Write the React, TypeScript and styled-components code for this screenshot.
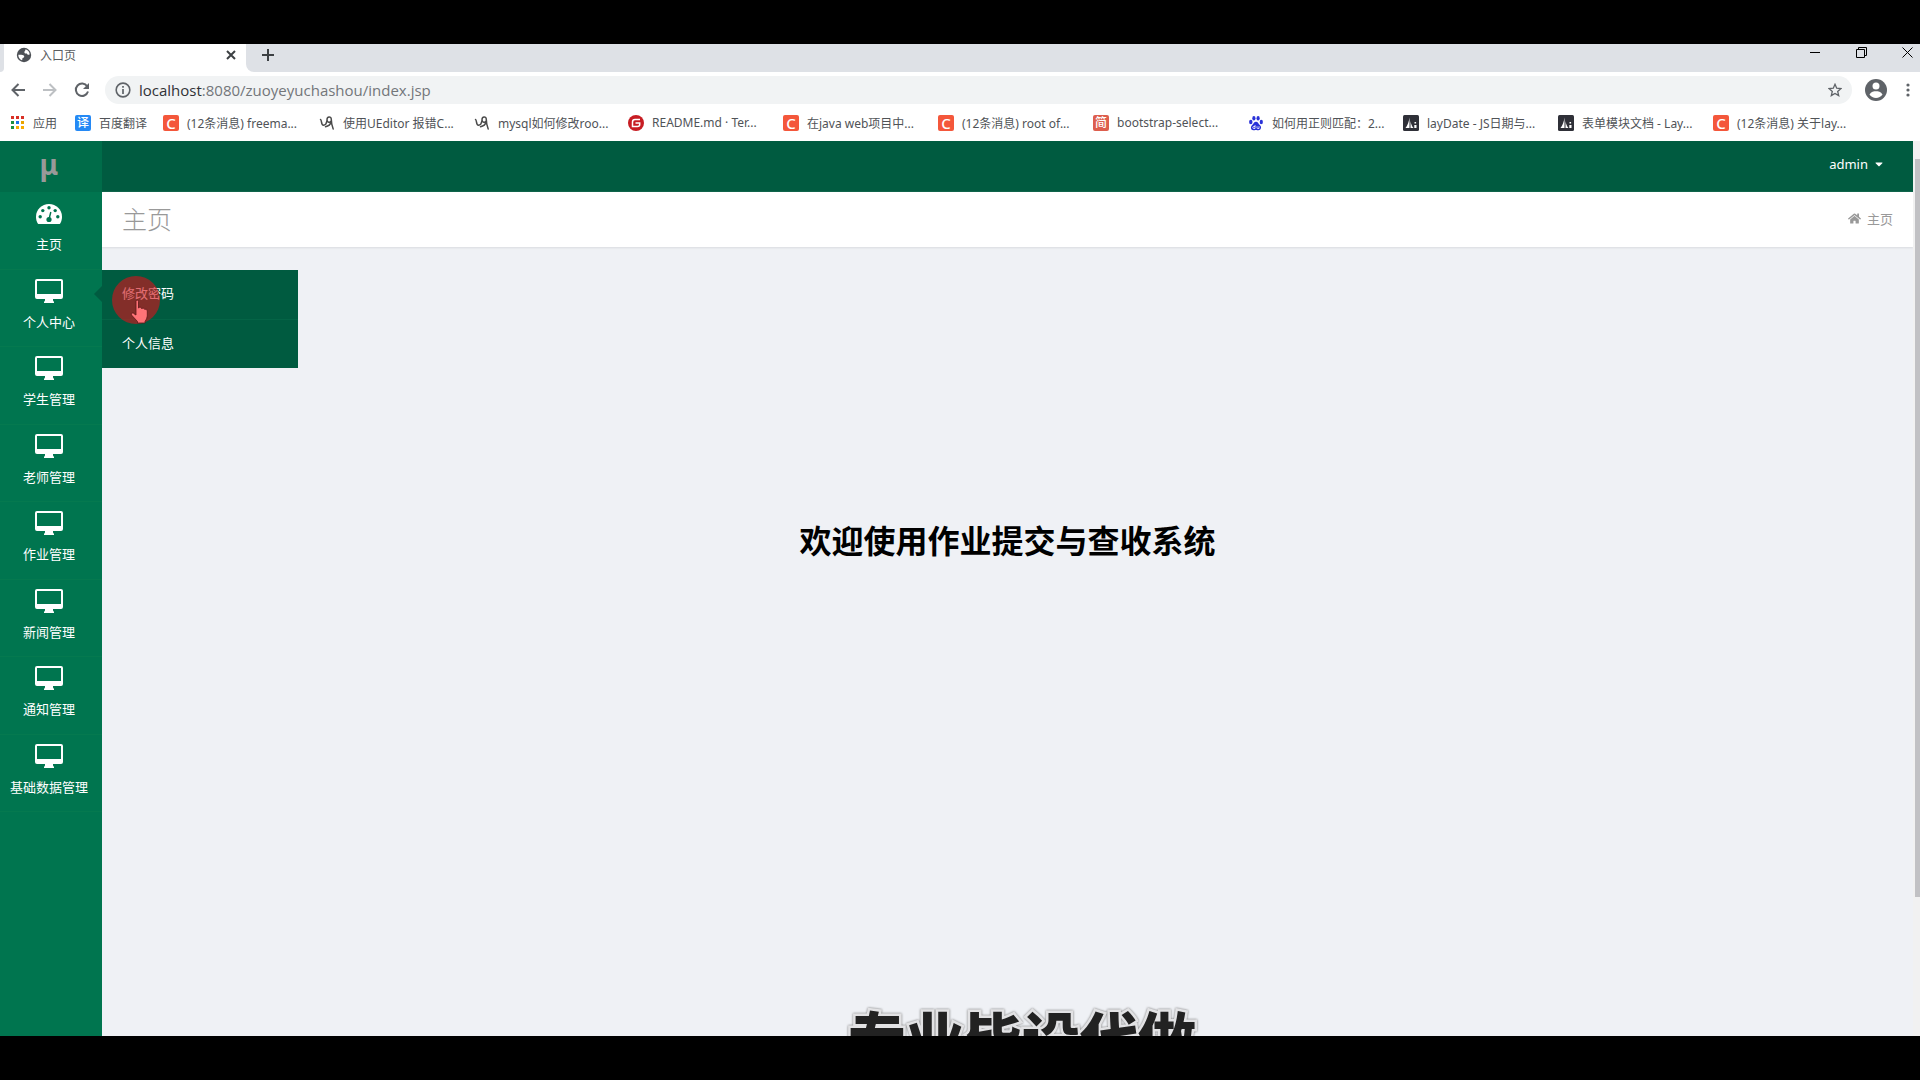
import React from "react";
import styled, { createGlobalStyle } from "styled-components";
import { FaHome, FaCaretDown } from "react-icons/fa";

const ui = `"Noto Sans", "Noto Sans CJK SC", sans-serif`;

const Global = createGlobalStyle`
  * { box-sizing: border-box; }
  body { margin: 0; background: #000; font-family: ${ui}; }
  button { font: inherit; color: inherit; background: none; border: 0; padding: 0; cursor: pointer; }
  a { color: inherit; text-decoration: none; }
  svg { display: block; flex: none; }
`;

const Frame = styled.div`
  height: 100vh;
  padding: 44px 0;
  background: #000;
  display: flex;
`;
const Browser = styled.div`
  position: relative;
  flex: 1;
  min-width: 0;
  display: flex;
  flex-direction: column;
  overflow: hidden;
  background: #fff;
`;
const TabStrip = styled.header`
  height: 28px;
  flex: none;
  display: flex;
  align-items: stretch;
`;
const StripStart = styled.div`
  width: 4px;
  background: #dee1e6;
  border-radius: 0 0 4px 0;
`;
const StripRest = styled.div`
  flex: 1;
  display: flex;
  background: #dee1e6;
  border-radius: 0 0 0 8px;
`;
const Tab = styled.div`
  width: 242px;
  display: flex;
  align-items: center;
  gap: 8px;
  padding: 0 8px 6px 12px;
  font-size: 12px;
  color: #5a5d61;
`;
const TabTitle = styled.span`
  flex: 1;
`;
const IconButton = styled.button<{ $w: number }>`
  width: ${(p) => p.$w}px;
  display: flex;
  align-items: center;
  justify-content: center;
`;
const NewTab = styled(IconButton)`
  padding-bottom: 6px;
`;
const WindowControls = styled.div`
  margin: 0 -10px 0 auto;
  display: flex;
  padding-bottom: 12px;
`;
const Toolbar = styled.div`
  height: 36px;
  flex: none;
  display: flex;
  align-items: center;
  padding-left: 2px;
`;
const Address = styled.div`
  flex: 1;
  height: 28px;
  display: flex;
  align-items: center;
  gap: 8px;
  margin: 0 4px 0 7px;
  padding: 0 10px;
  border-radius: 14px;
  background: #f1f3f4;
  font-family: "Open Sans", ${ui};
  font-size: 15px;
  color: #73767a;
`;
const Url = styled.span`
  flex: 1;
  line-height: 26px;
  b { font-weight: 400; color: #303236; }
`;
const Bookmarks = styled.nav`
  height: 33px;
  flex: none;
  display: flex;
  align-items: center;
  padding: 0 11px 4px;
  font-size: 12px;
  color: #505357;
  white-space: nowrap;
`;
const Bookmark = styled.a<{ $w: number }>`
  width: ${(p) => p.$w}px;
  display: flex;
  align-items: center;
  gap: 8px;
`;
const Favicon = styled.span<{ $bg: string; $size?: number }>`
  width: 16px;
  height: 16px;
  flex: none;
  display: flex;
  align-items: center;
  justify-content: center;
  border-radius: 2px;
  background: ${(p) => p.$bg};
  color: #fff;
  font-size: ${(p) => p.$size ?? 12}px;
  font-weight: 500;
  line-height: 16px;
`;
const Viewport = styled.div`
  flex: 1;
  min-height: 0;
  display: flex;
`;
const Sidebar = styled.aside`
  position: relative;
  width: 102px;
  flex: none;
  background: #00754f;
  color: #fff;
`;
const Brand = styled.a`
  height: 51px;
  display: flex;
  align-items: center;
  justify-content: center;
  padding: 0 4px 5px 0;
  background: #006c49;
  color: #999;
  font-size: 28px;
  font-weight: 700;
`;
const Menu = styled.nav`
  height: 620px;
  display: grid;
  grid-template-rows: repeat(8, 1fr);
`;
const MenuItem = styled.a`
  display: flex;
  flex-direction: column;
  align-items: center;
  gap: 9px;
  padding: 9px 4px 0 0;
  border-bottom: 1px solid #05794f;
  font-size: 13px;
  line-height: 20px;
  white-space: nowrap;
`;
const IconSlot = styled.span`
  height: 24px;
  display: flex;
  align-items: flex-end;
`;
const Submenu = styled.div`
  position: absolute;
  z-index: 2;
  left: 102px;
  top: 129px;
  width: 196px;
  background: #005b40;
  &::before {
    content: "";
    position: absolute;
    right: 100%;
    top: 16px;
    border: 8px solid transparent;
    border-left-width: 0;
    border-right-color: #005b40;
  }
`;
const SubItem = styled.a`
  height: 49px;
  display: flex;
  align-items: center;
  padding: 0 20px 4px;
  font-size: 13px;
  & + & { border-top: 1px solid #046446; }
`;
const Pointer = styled.div`
  position: absolute;
  left: 9px;
  top: 5px;
  width: 50px;
  height: 50px;
  pointer-events: none;
`;
const Main = styled.main`
  flex: 1;
  min-width: 0;
  display: flex;
  flex-direction: column;
  background: #eff1f5;
`;
const TopBar = styled.div`
  height: 51px;
  flex: none;
  display: flex;
  align-items: center;
  justify-content: flex-end;
  padding: 0 28px 6px 0;
  background: #005b40;
  color: #fff;
`;
const UserButton = styled.button`
  display: flex;
  align-items: center;
  gap: 5px;
  font-size: 13px;
`;
const TitleBar = styled.div`
  height: 55px;
  flex: none;
  display: flex;
  align-items: center;
  justify-content: space-between;
  padding: 0 20px 2px;
  background: #fff;
  box-shadow: 0 1px 2px #d9dbdf;
  color: #999;
`;
const Title = styled.h1`
  margin: 0;
  padding-bottom: 2px;
  font-size: 25px;
  font-weight: 300;
`;
const Crumb = styled.a`
  display: flex;
  align-items: center;
  gap: 6px;
  font-size: 13px;
`;
const Welcome = styled.h2`
  margin: 270px 0 0;
  text-align: center;
  font-size: 32px;
  line-height: 48px;
  font-weight: 700;
  color: #000;
`;
const Scrollbar = styled.div`
  width: 7px;
  flex: none;
  padding: 18px 0 0 2px;
  background: #f1f1f1;
`;
const Thumb = styled.div`
  height: 738px;
  background: #c1c1c4;
`;
const Caption = styled.div`
  position: absolute;
  left: 0;
  right: 0;
  bottom: -43px;
  padding-left: 124px;
  text-align: center;
  font-size: 58px;
  line-height: 80px;
  font-weight: 900;
  color: #222;
  -webkit-text-stroke: 5px #e2e2e4;
  paint-order: stroke fill;
  filter: drop-shadow(0 0 1px #777);
`;

const AppsIcon = () => (
  <svg width="14" height="14" viewBox="0 0 14 14">
    {["#d93025", "#d93025", "#d93025", "#1e8e3e", "#1a73e8", "#e8a400", "#1e8e3e", "#f9ab00", "#f9ab00"].map((f, i) => (
      <rect key={i} x={(i % 3) * 5} y={Math.floor(i / 3) * 5} width="3" height="3" fill={f} />
    ))}
  </svg>
);
const Bird = () => (
  <svg width="16" height="16" viewBox="0 0 16 16" fill="none" stroke="#4b4b4b" strokeWidth="1.5" strokeLinecap="round">
    <path d="M1.500 4.500C3 5 1.800 10 4.500 10.200C7.500 10 7.500 8 7.800 6" />
    <path d="M12.200 6C11 8 8 7.500 8 4.700C8 1.300 12.300 1 12.300 4.500C12.300 8 13 11 14.200 14" />
    <path d="M12.300 6.500C11.500 9.500 9 11.300 6.500 11.700" />
  </svg>
);
const Paw = () => (
  <svg width="16" height="16" viewBox="0 0 16 16" fill="#2a32d8">
    <ellipse cx="2.800" cy="7" rx="1.700" ry="2.200" />
    <ellipse cx="5.900" cy="3.300" rx="1.600" ry="2.300" />
    <ellipse cx="10.100" cy="3.300" rx="1.600" ry="2.300" />
    <ellipse cx="13.300" cy="7" rx="1.600" ry="2.200" />
    <path d="M8 6.800C10 6.800 10.500 9 12 10.300C14 12 13 15.200 10.500 15.200C9 15.200 9 14.900 8 14.900C7 14.900 6.500 15.200 5.300 15.200C2.800 15.200 2.200 12 4 10.300C5.500 9 6 6.800 8 6.800Z" />
    <path d="M7 10v3.500H5.800a1 1 0 010-2H7M9 11.300v1.500q0 .7.700.7H11v-2.200" fill="none" stroke="#fff" strokeWidth=".8" />
  </svg>
);
const Lay = () => (
  <svg width="16" height="16" viewBox="0 0 16 16">
    <rect width="16" height="16" rx="1.500" fill="#2f3038" />
    <path d="M6.500 2.500V13H2.500C4.500 10.500 5.800 7 6.500 2.500ZM7.500 6C8 9 9 11.500 10.500 13H7.500ZM11.300 10h2.200v3h-2.200ZM11.500 7h1.600v1.600h-1.600Z" fill="#fff" />
  </svg>
);
const Gitee = () => (
  <svg width="16" height="16" viewBox="0 0 16 16">
    <circle cx="8" cy="8" r="8" fill="#c71d23" />
    <path d="M12 4.500H7Q4.500 4.500 4.500 7v4.500H9.500Q11.700 11.500 11.700 9.500V7.900H7.500" fill="none" stroke="#fff" strokeWidth="1.500" />
  </svg>
);
const Globe = () => (
  <svg width="16" height="16" viewBox="0 0 16 16">
    <circle cx="8" cy="8" r="7.200" fill="#4d5156" />
    <path d="M9.500 2.300C11.800 2.900 13.500 5 13.700 7.300C12.500 8.400 11.300 7.600 10.900 6.500C9.500 6.900 8.200 6 8.400 4.900C8.500 4 9.700 3.700 9.500 2.300ZM2.300 7.800C4 7.500 6.800 7.500 8 8.700C8.700 10 7.800 10.600 6.600 10.900C6.300 11.600 6.500 12.400 6 13.300C3.800 12.500 2.300 10.500 2.300 7.800Z" fill="#fff" />
  </svg>
);
const Gauge = () => (
  <svg width="26" height="22" viewBox="0 0 26 22">
    <path d="M13 1C5.800 1 0 6.600 0 13.500C0 16.200.6 18.800 1.800 20.500Q2.200 21 3 21H23Q23.800 21 24.200 20.500C25.400 18.800 26 16.200 26 13.500C26 6.600 20.200 1 13 1Z" fill="#fff" />
    <g fill="#00754f">
      <circle cx="4.200" cy="13.800" r="1.700" /><circle cx="6.800" cy="7.600" r="1.700" /><circle cx="13" cy="4.800" r="1.700" />
      <circle cx="19.200" cy="7.600" r="1.700" /><circle cx="21.800" cy="13.800" r="1.700" /><circle cx="13" cy="16.500" r="2.600" />
    </g>
    <path d="M13 16.500L14.800 9" stroke="#00754f" strokeWidth="1.400" />
  </svg>
);
const Monitor = () => (
  <svg width="28" height="24" viewBox="0 0 28 24">
    <path fillRule="evenodd" fill="#fff" d="M2 0H26Q28 0 28 2V18Q28 20 26 20H18V21.500L19 23V24H9V23L10 21.500V20H2Q0 20 0 18V2Q0 0 2 0ZM2 2V15H26V2Z" />
  </svg>
);
const line = { fill: "none", stroke: "#5f6368", strokeWidth: 2 };

type Mark = { label: string; w: number; icon: React.ReactNode };
const csdn = <Favicon $bg="#f4573b" $size={15}>C</Favicon>;
const marks: Mark[] = [
  { label: "应用", w: 64, icon: <AppsIcon /> },
  { label: "百度翻译", w: 88, icon: <Favicon $bg="#2589f5">译</Favicon> },
  { label: "(12条消息) freema...", w: 156, icon: csdn },
  { label: "使用UEditor 报错C...", w: 155, icon: <Bird /> },
  { label: "mysql如何修改roo...", w: 154, icon: <Bird /> },
  { label: "README.md · Ter...", w: 155, icon: <Gitee /> },
  { label: "在java web项目中...", w: 155, icon: csdn },
  { label: "(12条消息) root of...", w: 155, icon: csdn },
  { label: "bootstrap-select...", w: 155, icon: <Favicon $bg="#dd5e4d">简</Favicon> },
  { label: "如何用正则匹配：2...", w: 155, icon: <Paw /> },
  { label: "layDate - JS日期与...", w: 155, icon: <Lay /> },
  { label: "表单模块文档 - Lay...", w: 155, icon: <Lay /> },
  { label: "(12条消息) 关于lay...", w: 155, icon: csdn },
];
const items = ["主页", "个人中心", "学生管理", "老师管理", "作业管理", "新闻管理", "通知管理", "基础数据管理"];

export default function App() {
  return (
    <Frame>
      <Global />
      <Browser>
        <TabStrip>
          <StripStart />
          <Tab>
            <Globe />
            <TabTitle>入口页</TabTitle>
            <IconButton $w={14} aria-label="Close tab">
              <svg width="10" height="10" viewBox="0 0 10 10"><path d="M1 1L9 9M9 1L1 9" {...line} stroke="#3c4043" /></svg>
            </IconButton>
          </Tab>
          <StripRest>
            <NewTab $w={44} aria-label="New tab">
              <svg width="12" height="12" viewBox="0 0 12 12"><path d="M6 0V12M0 6H12" {...line} stroke="#3c4043" /></svg>
            </NewTab>
            <WindowControls>
              <IconButton $w={46} aria-label="Minimize">
                <svg width="10" height="10" viewBox="0 0 10 10"><path d="M0 5.500H10" stroke="#000" /></svg>
              </IconButton>
              <IconButton $w={46} aria-label="Restore">
                <svg width="11" height="11" viewBox="0 0 11 11"><path d="M.5 2.500H8.500V10.500H.5ZM2.500 2.500V.5H10.500V8.500H8.500" fill="none" stroke="#000" /></svg>
              </IconButton>
              <IconButton $w={46} aria-label="Close window">
                <svg width="11" height="11" viewBox="0 0 11 11"><path d="M.5.5L10.500 10.500M10.500.5L.5 10.500" stroke="#000" /></svg>
              </IconButton>
            </WindowControls>
          </StripRest>
        </TabStrip>
        <Toolbar>
          <IconButton $w={32} aria-label="Back">
            <svg width="14" height="14" viewBox="0 0 14 14"><path d="M14 7H1.500M7.500 1L1.500 7L7.500 13" {...line} /></svg>
          </IconButton>
          <IconButton $w={32} aria-label="Forward">
            <svg width="14" height="14" viewBox="0 0 14 14"><path d="M0 7H12.500M6.500 1L12.500 7L6.500 13" {...line} stroke="#bdc0c3" /></svg>
          </IconButton>
          <IconButton $w={32} aria-label="Reload">
            <svg width="16" height="16" viewBox="0 0 16 16"><path d="M13.200 4.200A6.200 6.200 0 1014 9.500" {...line} /><path d="M15 1V7H9Z" fill="#5f6368" /></svg>
          </IconButton>
          <Address>
            <svg width="16" height="16" viewBox="0 0 15 15"><circle cx="7.500" cy="7.500" r="6.400" {...line} strokeWidth={1.5} /><path d="M7.500 6.500V11.300M7.500 3.700V5.300" {...line} strokeWidth={1.6} /></svg>
            <Url><b>localhost</b>:8080/zuoyeyuchashou/index.jsp</Url>
            <svg width="14" height="14" viewBox="0 0 14 14"><path d="M7 1.300L8.700 5.200L12.900 5.600L9.700 8.400L10.700 12.600L7 10.400L3.300 12.600L4.300 8.400L1.100 5.600L5.300 5.200Z" {...line} strokeWidth={1.3} /></svg>
          </Address>
          <IconButton $w={40} aria-label="Profile">
            <svg width="22" height="22" viewBox="0 0 22 22"><circle cx="11" cy="11" r="11" fill="#5f6368" /><circle cx="11" cy="7" r="3.500" fill="#fff" /><path d="M4.500 15.500C6 12.700 9 12.300 11 12.300S16 12.700 17.500 15.500C16 17.800 13.600 19 11 19S6 17.800 4.500 15.500Z" fill="#fff" /></svg>
          </IconButton>
          <IconButton $w={24} aria-label="Browser menu">
            <svg width="4" height="14" viewBox="0 0 4 14" fill="#5f6368"><circle cx="2" cy="2" r="1.600" /><circle cx="2" cy="7" r="1.600" /><circle cx="2" cy="12" r="1.600" /></svg>
          </IconButton>
        </Toolbar>
        <Bookmarks>
          {marks.map((m) => (
            <Bookmark key={m.label} href="#" $w={m.w}>{m.icon}<span>{m.label}</span></Bookmark>
          ))}
        </Bookmarks>
        <Viewport>
          <Sidebar>
            <Brand href="#">μ</Brand>
            <Menu>
              {items.map((t, i) => (
                <MenuItem key={t} href="#"><IconSlot>{i ? <Monitor /> : <Gauge />}</IconSlot><span>{t}</span></MenuItem>
              ))}
            </Menu>
            <Submenu>
              <SubItem href="#">修改密码</SubItem>
              <SubItem href="#">个人信息</SubItem>
              <Pointer>
                <svg width="50" height="50" viewBox="0 0 50 50">
                  <circle cx="25" cy="25" r="24" fill="#d3131b" fillOpacity=".62" />
                  <path d="M25 27.500Q25 26 26.200 26T27.500 27.500V34Q28 33 29.500 33.300Q30.300 33.500 30.500 34.500Q33 33.300 33.500 35.300Q36.300 34.500 36.300 37V42Q36 45 34 47.500V49H26.500V47.500L20.500 41Q19.500 39.500 21 39T24 40.500L25 41Z" transform="translate(0 -1)" fill="#ff7377" stroke="#5b1717" strokeWidth=".8" />
                </svg>
              </Pointer>
            </Submenu>
          </Sidebar>
          <Main>
            <TopBar><UserButton>admin <FaCaretDown size={12} /></UserButton></TopBar>
            <TitleBar>
              <Title>主页</Title>
              <Crumb href="#"><FaHome size={13} />主页</Crumb>
            </TitleBar>
            <Welcome>欢迎使用作业提交与查收系统</Welcome>
          </Main>
          <Scrollbar><Thumb /></Scrollbar>
        </Viewport>
        <Caption>专业毕设代做</Caption>
      </Browser>
    </Frame>
  );
}
